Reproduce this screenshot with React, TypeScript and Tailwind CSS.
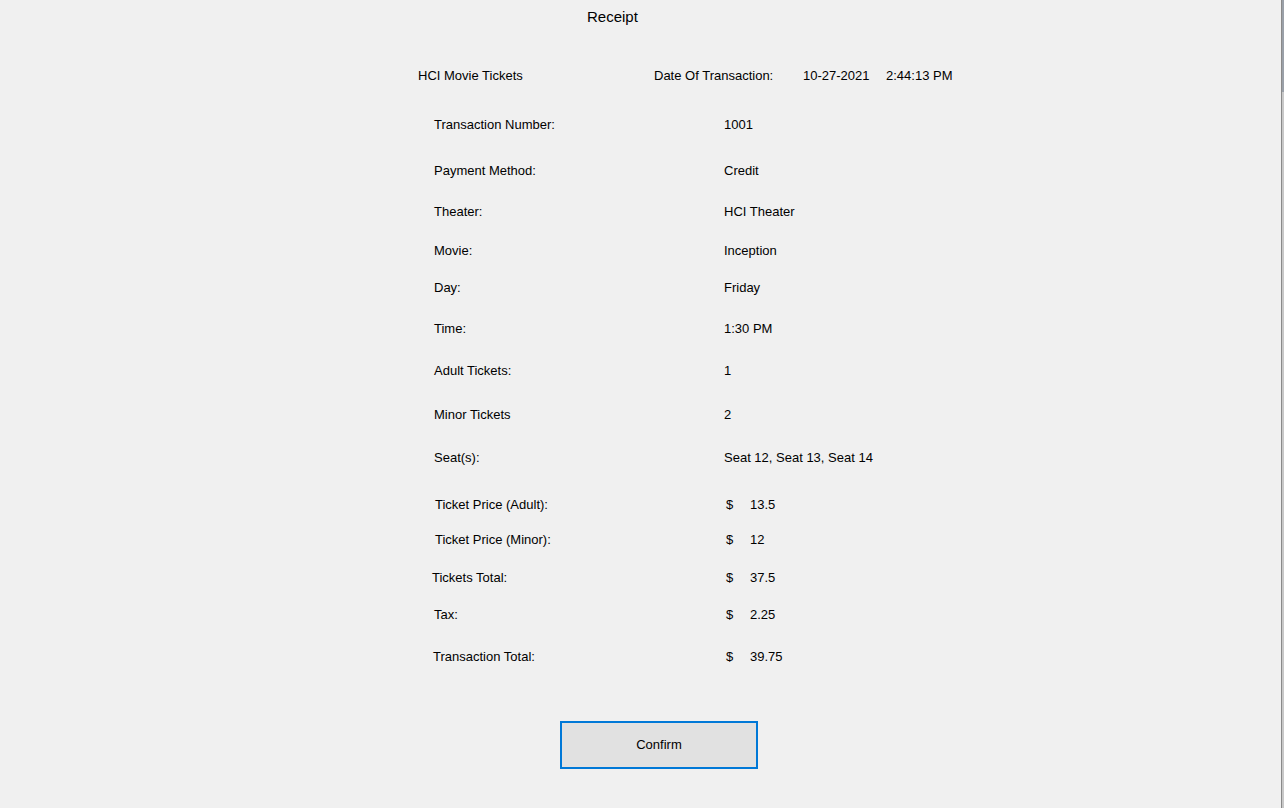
import React from "react"

type Row = {
  label: string
  value?: string
  amount?: string
  h: string
  indent: string
}

const rows: Row[] = [
  { label: "Transaction Number:", value: "1001", h: "h-[46px]", indent: "pl-[16px]" },
  { label: "Payment Method:", value: "Credit", h: "h-[41px]", indent: "pl-[16px]" },
  { label: "Theater:", value: "HCI Theater", h: "h-[39px]", indent: "pl-[16px]" },
  { label: "Movie:", value: "Inception", h: "h-[37px]", indent: "pl-[16px]" },
  { label: "Day:", value: "Friday", h: "h-[41px]", indent: "pl-[16px]" },
  { label: "Time:", value: "1:30 PM", h: "h-[42px]", indent: "pl-[16px]" },
  { label: "Adult Tickets:", value: "1", h: "h-[44px]", indent: "pl-[16px]" },
  { label: "Minor Tickets", value: "2", h: "h-[43px]", indent: "pl-[16px]" },
  { label: "Seat(s):", value: "Seat 12, Seat 13, Seat 14", h: "h-[47px]", indent: "pl-[16px]" },
  { label: "Ticket Price (Adult):", amount: "13.5", h: "h-[35px]", indent: "pl-[17px]" },
  { label: "Ticket Price (Minor):", amount: "12", h: "h-[38px]", indent: "pl-[17px]" },
  { label: "Tickets Total:", amount: "37.5", h: "h-[37px]", indent: "pl-[14px]" },
  { label: "Tax:", amount: "2.25", h: "h-[42px]", indent: "pl-[16px]" },
  { label: "Transaction Total:", amount: "39.75", h: "h-[15px]", indent: "pl-[15px]" },
]

function ReceiptRow({ row }: { row: Row }) {
  return (
    <div className={`flex items-start leading-[15px] ${row.h}`}>
      <div className={`w-[306px] shrink-0 ${row.indent}`}>{row.label}</div>
      {row.amount ? (
        <div className="flex pl-[2px]">
          <span className="w-[24px]">$</span>
          <span>{row.amount}</span>
        </div>
      ) : (
        <div>{row.value}</div>
      )}
    </div>
  )
}

export default function App() {
  return (
    <div
      className="flex w-[1284px] h-[808px] overflow-hidden bg-[#f0f0f0] text-[13px] text-black"
      style={{ fontFamily: '"Liberation Sans", Arial, sans-serif' }}
    >
      <div className="flex-1 flex flex-col pl-[418px]">
        <div className="pl-[169px] pt-[8px] text-[15px] leading-[17px]">Receipt</div>

        {/* header line */}
        <div className="mt-[43px] flex leading-[15px] h-[15px]">
          <div className="w-[236px]">HCI Movie Tickets</div>
          <div className="w-[149px]">Date Of Transaction:</div>
          <div className="w-[83px]">10-27-2021</div>
          <div>2:44:13 PM</div>
        </div>

        <div className="mt-[34px] flex flex-col">
          {rows.map((row) => (
            <ReceiptRow key={row.label} row={row} />
          ))}
        </div>

        <button className="mt-[57px] ml-[142px] w-[198px] h-[48px] border-2 border-[#0078d7] bg-[#e1e1e1] text-[13px] text-black">
          Confirm
        </button>
      </div>

      {/* edge of the window behind */}
      <div className="flex w-[3px] shrink-0">
        <div className="w-px bg-[#8a8a8a]" />
        <div className="flex-1 flex flex-col">
          <div className="h-[92px] bg-[#9aa0a8]" />
          <div className="flex-1 bg-[#c8c8c8]" />
        </div>
      </div>
    </div>
  )
}
